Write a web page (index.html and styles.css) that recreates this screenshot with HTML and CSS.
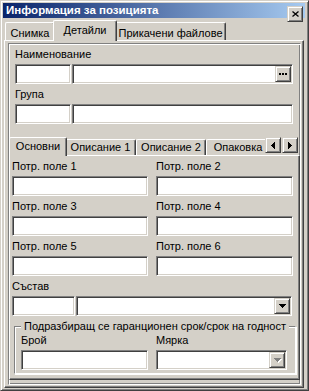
FILE: index.html
```html
<!DOCTYPE html>
<html lang="bg">

<head>
    <meta charset="UTF-8">
    <meta name="viewport" content="width=device-width, initial-scale=1.0">
    <title>Информация за позицията</title>
    <link rel="stylesheet" href="styles.css">
</head>

<body>
    <div class="window">
        <div class="titlebar">
            <span class="title">Информация за позицията</span>
            <span class="btn close-btn">
                <svg width="7" height="6" viewBox="0 0 7 6"><path d="M0.5 0.5 L6.5 5.5 M6.5 0.5 L0.5 5.5" stroke="#000" stroke-width="1.3" /></svg>
            </span>
        </div>

        <div class="tabs top-tabs">
            <div class="tab w-snimka">Снимка</div>
            <div class="tab active w-detaili">Детайли</div>
            <div class="tab w-files">Прикачени файлове</div>
        </div>

        <div class="tab-pane">
            <div class="etched">
                <div class="label">Наименование</div>
                <div class="field-row">
                    <div class="edit code"></div>
                    <div class="edit name">
                        <span class="btn">
                            <svg width="8" height="2" viewBox="0 0 8 2" shape-rendering="crispEdges"><rect x="0" y="0" width="2" height="2" /><rect x="3" y="0" width="2" height="2" /><rect x="6" y="0" width="2" height="2" /></svg>
                        </span>
                    </div>
                </div>
                <div class="label">Група</div>
                <div class="field-row">
                    <div class="edit code"></div>
                    <div class="edit name"></div>
                </div>

                <div class="subtabs">
                    <div class="subtab-strip">
                        <div class="tabs inner-tabs">
                            <div class="tab active w-osnovni">Основни</div>
                            <div class="tab w-opis1">Описание 1</div>
                            <div class="tab w-opis2">Описание 2</div>
                            <div class="tab w-opakovka">Опаковка</div>
                        </div>
                        <div class="scroll-btns">
                            <span class="btn scroll-btn">
                                <svg width="4" height="7" viewBox="0 0 4 7" shape-rendering="crispEdges"><rect x="3" y="0" width="1" height="7" /><rect x="2" y="1" width="1" height="5" /><rect x="1" y="2" width="1" height="3" /><rect x="0" y="3" width="1" height="1" /></svg>
                            </span>
                            <span class="btn scroll-btn">
                                <svg width="4" height="7" viewBox="0 0 4 7" shape-rendering="crispEdges"><rect x="0" y="0" width="1" height="7" /><rect x="1" y="1" width="1" height="5" /><rect x="2" y="2" width="1" height="3" /><rect x="3" y="3" width="1" height="1" /></svg>
                            </span>
                        </div>
                    </div>

                    <div class="subpane">
                        <div class="grid">
                            <div class="cell"><div class="label">Потр. поле 1</div><div class="edit"></div></div>
                            <div class="cell"><div class="label">Потр. поле 2</div><div class="edit"></div></div>
                            <div class="cell"><div class="label">Потр. поле 3</div><div class="edit"></div></div>
                            <div class="cell"><div class="label">Потр. поле 4</div><div class="edit"></div></div>
                            <div class="cell"><div class="label">Потр. поле 5</div><div class="edit"></div></div>
                            <div class="cell"><div class="label">Потр. поле 6</div><div class="edit"></div></div>
                        </div>

                        <div class="label sastav">Състав</div>
                        <div class="field-row">
                            <div class="edit sastav-code"></div>
                            <div class="edit sastav-name">
                                <span class="btn">
                                    <svg width="7" height="4" viewBox="0 0 7 4" shape-rendering="crispEdges"><rect x="0" y="0" width="7" height="1" /><rect x="1" y="1" width="5" height="1" /><rect x="2" y="2" width="3" height="1" /><rect x="3" y="3" width="1" height="1" /></svg>
                                </span>
                            </div>
                        </div>

                        <fieldset class="group">
                            <legend>Подразбиращ се гаранционен срок/срок на годност</legend>
                            <div class="group-row">
                                <div class="cell"><div class="label">Брой</div><div class="edit"></div></div>
                                <div class="cell">
                                    <div class="label">Мярка</div>
                                    <div class="edit">
                                        <span class="btn disabled">
                                            <svg width="8" height="5" viewBox="0 0 8 5" shape-rendering="crispEdges">
                                                <g fill="#fff"><rect x="1" y="1" width="7" height="1" /><rect x="2" y="2" width="5" height="1" /><rect x="3" y="3" width="3" height="1" /><rect x="4" y="4" width="1" height="1" /></g>
                                                <g fill="#808080"><rect x="0" y="0" width="7" height="1" /><rect x="1" y="1" width="5" height="1" /><rect x="2" y="2" width="3" height="1" /><rect x="3" y="3" width="1" height="1" /></g>
                                            </svg>
                                        </span>
                                    </div>
                                </div>
                            </div>
                        </fieldset>
                    </div>
                </div>
            </div>
        </div>
    </div>
</body>

</html>
```

FILE: styles.css
```css
body {
    margin: 0;
    background: #d4d0c8;
    font-family: 'Liberation Sans', Arial, sans-serif;
    font-size: 11px;
    line-height: 13px;
    color: #000;
}

.window {
    width: 309px;
    height: 391px;
    box-sizing: border-box;
    padding: 2px;
    border: 1px solid;
    border-color: #d4d0c8 #404040 #404040 #d4d0c8;
    box-shadow: inset 1px 1px #fff, inset -1px -1px #808080;
}

/* title bar */
.titlebar {
    display: flex;
    justify-content: space-between;
    align-items: flex-start;
    height: 15px;
    margin-right: 1px;
    padding-left: 3px;
    background: linear-gradient(to right, #0a246a, #a6caf0);
    color: #fff;
    font-size: 11.5px;
    font-weight: bold;
}

.title {
    padding-top: 1px;
}

.close-btn {
    width: 11px;
    height: 10px;
    margin-top: 3px;
    margin-right: 2px;
}

/* raised button */
.btn {
    box-sizing: border-box;
    width: 16px;
    height: 16px;
    display: flex;
    align-items: center;
    justify-content: center;
    background: #d4d0c8;
    border: 1px solid;
    border-color: #d4d0c8 #404040 #404040 #d4d0c8;
    box-shadow: inset 1px 1px #fff, inset -1px -1px #808080;
}

.btn svg {
    display: block;
}

/* tabs */
.tabs {
    display: flex;
    align-items: flex-start;
}

.tab {
    box-sizing: border-box;
    flex: none;
    height: 18px;
    margin-top: 2px;
    padding-top: 4px;
    text-align: center;
    white-space: nowrap;
    border-top: 1px solid #fff;
    border-left: 1px solid #fff;
    border-right: 1px solid #404040;
    border-radius: 2px 2px 0 0;
    box-shadow: inset -1px 0 #808080;
    background: #d4d0c8;
}

.tab.active {
    height: 21px;
    margin-top: 0;
    margin-left: -2px;
    margin-right: -2px;
    padding-top: 3px;
    position: relative;
    z-index: 1;
}

.top-tabs {
    height: 20px;
    margin-top: 2px;
    margin-left: 2px;
}

.w-snimka { width: 50px; }
.w-detaili { width: 64px; }
.w-files { width: 111px; }

.tab-pane {
    box-sizing: border-box;
    width: 300px;
    height: 348px;
    margin-left: 1px;
    padding: 2px 0 0 3px;
    border: 1px solid;
    border-color: #fff #404040 #404040 #fff;
    box-shadow: inset -1px -1px #808080;
}

.etched {
    box-sizing: border-box;
    width: 293px;
    height: 342px;
    padding: 4px 6px 0;
    border: 1px solid;
    border-color: #808080 #fff #fff #808080;
    box-shadow: inset 1px 1px #fff, inset -1px -1px #808080;
}

.label {
    height: 13px;
    margin-bottom: 3px;
    white-space: nowrap;
}

.field-row {
    display: flex;
    gap: 1px;
    margin-bottom: 4px;
}

/* sunken edit box */
.edit {
    box-sizing: border-box;
    height: 20px;
    padding: 1px;
    display: flex;
    justify-content: flex-end;
    background: #fff;
    border: 1px solid;
    border-color: #808080 #fff #fff #808080;
    box-shadow: inset 1px 1px #404040, inset -1px -1px #d4d0c8;
}

.code { width: 56px; }
.name { width: 221px; }

/* inner tab control */
.subtabs {
    margin: 13px -6px 0;
}

.subtab-strip {
    display: flex;
    align-items: flex-start;
    height: 19px;
    margin-bottom: -1px;
    position: relative;
    z-index: 1;
}

.inner-tabs {
    box-sizing: border-box;
    width: 256px;
    height: 19px;
    padding-left: 2px;
    overflow: hidden;
}

.inner-tabs .tab {
    height: 16px;
    padding-top: 1px;
}

.inner-tabs .tab.active {
    height: 19px;
    padding-top: 2px;
}

.w-osnovni { width: 58px; }
.w-opis1 { width: 71px; }
.w-opis2 { width: 70px; }
.w-opakovka { width: 64px; }

.scroll-btns {
    display: flex;
    gap: 1px;
}

.subpane {
    box-sizing: border-box;
    height: 225px;
    padding: 4px 0 0 2px;
    border: 1px solid;
    border-color: #fff #404040 #404040 #fff;
    box-shadow: inset -1px -1px #808080;
}

.grid {
    display: grid;
    grid-template-columns: 136px 137px;
    column-gap: 8px;
    row-gap: 4px;
}

.sastav {
    margin-top: 4px;
}

.sastav-code { width: 63px; }
.sastav-name { width: 216px; }

/* group box */
.group {
    box-sizing: border-box;
    width: 280px;
    margin: 0 0 0 2px;
    padding: 1px 6px 3px;
    border: 1px solid;
    border-color: #808080 #fff #fff #808080;
    box-shadow: inset 1px 1px #fff, 1px 1px #fff;
}

.group legend {
    padding: 0 3px;
    background: #d4d0c8;
    white-space: nowrap;
}

.group-row {
    display: grid;
    grid-template-columns: 127px 131px;
    column-gap: 8px;
}

.btn.disabled svg {
    margin: 1px 0 0 1px;
}
```
